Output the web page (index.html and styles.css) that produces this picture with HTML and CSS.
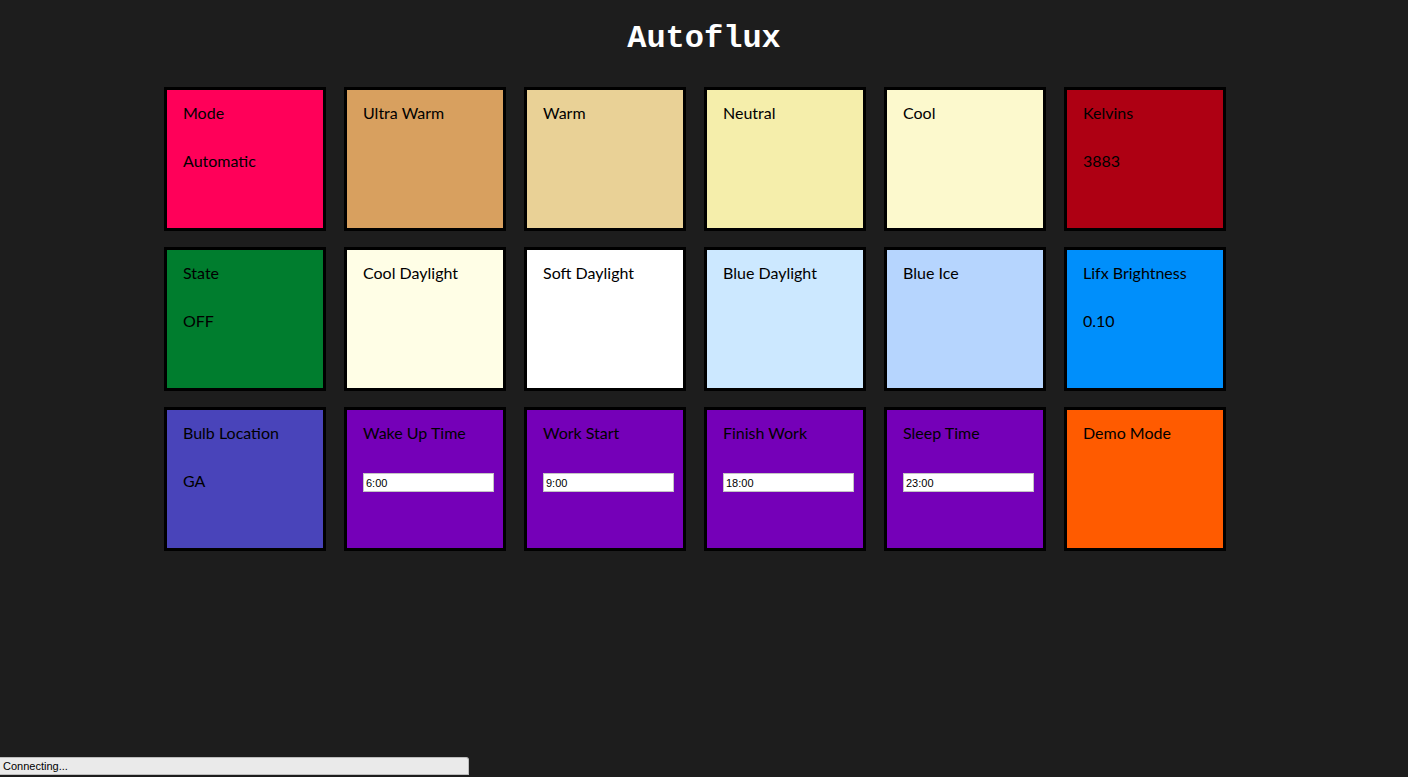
FILE: index.html
```html
<!DOCTYPE html>
<html>
<head>
<meta charset="utf-8">
<title>Autoflux</title>
<link rel="stylesheet" href="styles.css">
</head>
<body>
<h1 class="title">Autoflux</h1>
<div class="grid">
  <div class="tile c-mode"><div class="label">Mode</div><div class="value">Automatic</div></div>
  <div class="tile c-ultrawarm"><div class="label">Ultra Warm</div></div>
  <div class="tile c-warm"><div class="label">Warm</div></div>
  <div class="tile c-neutral"><div class="label">Neutral</div></div>
  <div class="tile c-cool"><div class="label">Cool</div></div>
  <div class="tile c-kelvins"><div class="label">Kelvins</div><div class="value">3883</div></div>

  <div class="tile c-state"><div class="label">State</div><div class="value">OFF</div></div>
  <div class="tile c-cooldaylight"><div class="label">Cool Daylight</div></div>
  <div class="tile c-softdaylight"><div class="label">Soft Daylight</div></div>
  <div class="tile c-bluedaylight"><div class="label">Blue Daylight</div></div>
  <div class="tile c-blueice"><div class="label">Blue Ice</div></div>
  <div class="tile c-lifx"><div class="label">Lifx Brightness</div><div class="value">0.10</div></div>

  <div class="tile c-location"><div class="label">Bulb Location</div><div class="value">GA</div></div>
  <div class="tile c-purple"><div class="label">Wake Up Time</div><input class="time" type="text" value="6:00"></div>
  <div class="tile c-purple"><div class="label">Work Start</div><input class="time" type="text" value="9:00"></div>
  <div class="tile c-purple"><div class="label">Finish Work</div><input class="time" type="text" value="18:00"></div>
  <div class="tile c-purple"><div class="label">Sleep Time</div><input class="time" type="text" value="23:00"></div>
  <div class="tile c-demo"><div class="label">Demo Mode</div></div>
</div>
<div class="status">Connecting...</div>
</body>
</html>
```
FILE: styles.css
```css
html, body {
  margin: 0;
  padding: 0;
  background: #1d1d1d;
  height: 100%;
  overflow: hidden;
}
.title {
  margin: 0;
  padding-top: 21px;
  font-family: "Liberation Mono", "Courier New", monospace;
  font-weight: bold;
  font-size: 32px;
  line-height: 36px;
  color: #ffffff;
  text-align: center;
}
.grid {
  display: grid;
  grid-template-columns: repeat(6, 162px);
  column-gap: 18px;
  row-gap: 16px;
  margin: 30px 0 0 164px;
}
.tile {
  box-sizing: border-box;
  width: 162px;
  height: 144px;
  border: 3px solid #000;
  padding: 13px 16px 0 16px;
  font-family: "Lato", "Noto Sans", sans-serif;
  font-size: 16px;
  line-height: 20px;
  color: #000;
}
.value {
  margin-top: 28px;
}
.time {
  display: block;
  box-sizing: border-box;
  width: 131px;
  height: 19px;
  margin-top: 30px;
  padding: 0 2px;
  border: 1px solid #c4c4c4;
  background: #fff;
  font-family: "Liberation Sans", Arial, sans-serif;
  font-size: 11px;
  color: #000;
  outline: none;
}
.c-mode { background: #ff0059; }
.c-ultrawarm { background: #d8a05f; }
.c-warm { background: #e9d196; }
.c-neutral { background: #f5eeab; }
.c-cool { background: #fcf9cd; }
.c-kelvins { background: #ae0013; }
.c-state { background: #007d2e; }
.c-cooldaylight { background: #fffee6; }
.c-softdaylight { background: #ffffff; }
.c-bluedaylight { background: #cce8ff; }
.c-blueice { background: #b6d5fe; }
.c-lifx { background: #008ffb; }
.c-location { background: #4944ba; }
.c-purple { background: #7500b8; }
.c-demo { background: #ff5b00; }
.status {
  position: fixed;
  left: 0;
  bottom: 2px;
  box-sizing: border-box;
  width: 469px;
  height: 18px;
  padding: 2px 0 0 3px;
  background: #eaeaea;
  border: 1px solid #bdbdbd;
  border-left: none;
  border-top-right-radius: 3px;
  font-family: "Liberation Sans", Arial, sans-serif;
  font-size: 11px;
  line-height: 13px;
  color: #000;
}
```
